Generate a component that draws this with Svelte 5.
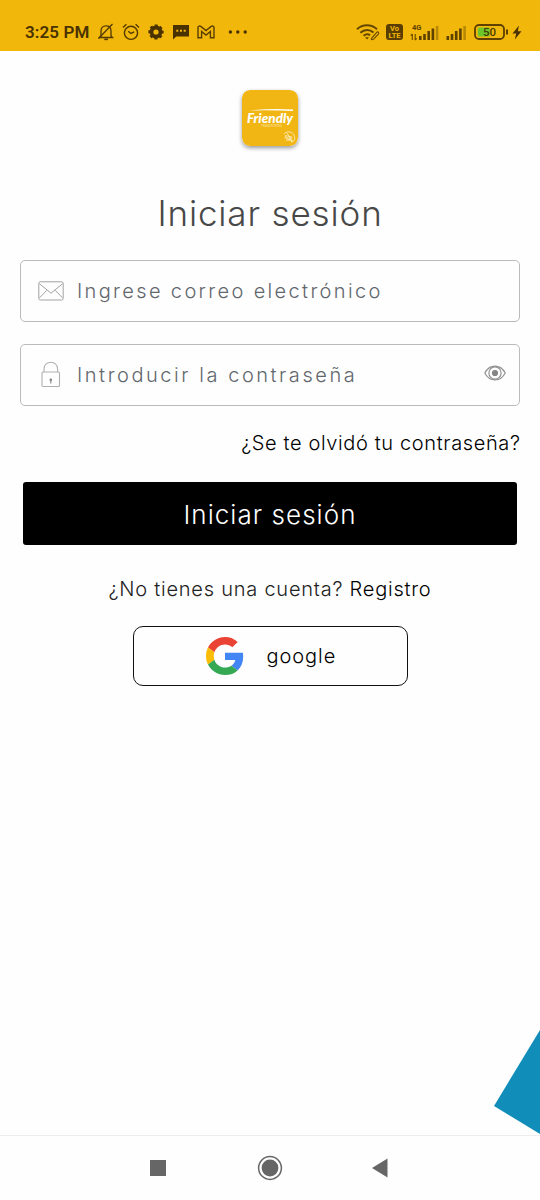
<script>
	let email = $state("");
	let password = $state("");
	let showPassword = $state(false);

	// bar heights of the signal icons, the last one is dimmed
	const bars = [4, 6, 9, 11.5, 14];
</script>

<div class="screen">
	<header class="status">
		<span class="time">3:25 PM</span>
		<svg class="bell" width="18" height="18" viewBox="0 0 18 18" fill="none" stroke="#533900" stroke-width="1.3">
			<path d="M4 12.8V8C4 4.7 6 2.8 9 2.8s5 1.9 5 5.2v4.8l1.5 1.7H2.5z" />
			<path d="M1.5 15.5L15.5 1" />
			<path d="M7.3 16.3h3.6" stroke-width="1.7" />
		</svg>
		<svg class="alarm" width="18" height="18" viewBox="0 0 18 18" fill="none" stroke="#533900" stroke-width="1.4">
			<circle cx="9" cy="9.8" r="6.6" />
			<path d="M1 4.4L4.4 1.3M17 4.4l-3.4-3.1M6.2 8.2L9 10.5l3.2-1.6" />
		</svg>
		<svg class="gear" width="16" height="16" viewBox="0 0 16 16" fill="none" stroke="#4a3200">
			<circle cx="8" cy="8" r="4.5" stroke-width="3.8" />
			<circle cx="8" cy="8" r="6.6" stroke-width="2" stroke-dasharray="3.1 2.08" stroke-dashoffset="1.5" />
		</svg>
		<svg class="chat" width="18" height="16" viewBox="0 0 18 16">
			<path d="M1 1h16v11.5H4.3L1 15.5z" fill="#4a3200" />
			<path d="M4.3 6.8h2m1.7 0h2m1.7 0h2" stroke="#f1b80b" stroke-width="2" />
		</svg>
		<svg class="mail" width="18" height="14" viewBox="0 0 18 14" fill="none" stroke="#5a3d00" stroke-width="1.4">
			<path d="M1 12.7V2.6C1 .9 2.7.6 3.8 1.4L9 5.5l5.2-4.1C15.3.6 17 .9 17 2.6v10.1h-3.6V6.5L9 10 4.6 6.5v6.2z" />
		</svg>
		<svg class="dots" width="20" height="4" viewBox="0 0 20 4" fill="#4a3200">
			<circle cx="2.4" cy="2" r="1.7" /><circle cx="9.8" cy="2" r="1.7" /><circle cx="17.2" cy="2" r="1.7" />
		</svg>

		<svg class="wifi" width="24" height="18" viewBox="0 0 24 18" fill="none" stroke="#654700" stroke-width="2">
			<path d="M1 6.3C6.6.9 15.4.9 21 6.3M4.3 9.7c4-3.7 9.4-3.7 13.2-.3M7.6 12.8c1.8-1.7 4.6-1.9 6.5-.7" />
			<path d="M9 14.2l2 2.2 2-2.2z" fill="#654700" stroke="none" />
			<path d="M15.5 15.3l5.2-6c1.5-1 2.7.5 1.7 1.8l-4.8 5c-1.5 1-2.8.3-2.1-.8z" stroke-width="1.1" />
		</svg>
		<svg class="volte" width="17" height="16" viewBox="0 0 17 16">
			<rect width="17" height="16" rx="3" fill="#5a3d00" />
			<text x="8.5" y="7.2" text-anchor="middle">Vo</text>
			<text x="8.5" y="14.2" text-anchor="middle">LTE</text>
		</svg>
		<svg class="signal" width="29" height="18" viewBox="0 0 29 18">
			<text class="net" x="2" y="7">4G</text>
			<path d="M2.3 17v-6M.8 12.6L2.3 11M5.2 11v6M6.7 15.4L5.2 17" stroke="#654700" stroke-width="1.1" fill="none" />
			{#each bars as h, i}
				<rect x={9 + i * 4.2} y={17 - h} width="2.6" height={h} fill="#5e4100" opacity={i === 4 ? 0.4 : 1} />
			{/each}
		</svg>
		<svg class="signal2" width="21" height="18" viewBox="0 0 21 18">
			{#each bars as h, i}
				<rect x={0.5 + i * 4.2} y={17 - h} width="2.6" height={h} fill="#5e4100" opacity={i === 4 ? 0.4 : 1} />
			{/each}
		</svg>
		<svg class="battery" width="35" height="16" viewBox="0 0 35 16">
			<rect x="1" y="1" width="29" height="14" rx="4" fill="none" stroke="#5e4100" stroke-width="1.8" />
			<rect x="3.8" y="3.6" width="12" height="8.8" rx="1.5" fill="#6cc72a" />
			<path d="M33 5.5v5" stroke="#5e4100" stroke-width="2" />
			<text class="level" x="15.5" y="12" text-anchor="middle">50</text>
		</svg>
		<svg class="bolt" width="10" height="15" viewBox="0 0 10 15" fill="#4a3200">
			<path d="M7 .5L.5 8.6h3.7L2.8 14.5 9.5 6.2H5.8z" />
		</svg>
	</header>

	<main>
		<svg class="logo" width="56" height="56" viewBox="0 0 56 56">
			<rect width="56" height="56" rx="8" fill="#f1b514" />
			<path d="M7 20.6Q28 18.2 51 19.6V21Q28 19.8 7 20.6z" fill="#fff" />
			<text class="brand" x="5" y="32.5" textLength="46" lengthAdjust="spacingAndGlyphs">Friendly</text>
			<text class="tag" x="19" y="37" textLength="21">TRANSPORTES</text>
			<g fill="none" stroke="#fff3c8" stroke-width=".8">
				<path d="M42 44c2-3 8-3 10 1s0 7-3 7M43 45.5l7 1.5M42.5 48h8M44 50.5l5-1.5M45 43l5 8M43 46c2 3 4 5 8 5" />
			</g>
		</svg>

		<h1>Iniciar sesión</h1>

		<label class="field">
			<svg class="envelope" width="26" height="20" viewBox="0 0 26 20" fill="none" stroke="#a2a2a2" stroke-width="1">
				<rect x=".8" y=".8" width="24.4" height="18.2" rx="1.6" />
				<path d="M1.5 2.8L13 12.2 24.5 2.8M1.5 16.8l7.3-7.5M24.5 16.8l-7.3-7.5" />
			</svg>
			<input class="mailtext" type="text" placeholder="Ingrese correo electrónico" bind:value={email} />
		</label>

		<label class="field second">
			<svg class="lock" width="20" height="27" viewBox="0 0 20 27" fill="none" stroke="#b0b0b0" stroke-width="1.1">
				<rect x="1" y="11" width="17.5" height="14.5" rx="1" />
				<path d="M3 11V8c0-9 13.6-9 13.6 0v3" />
				<path d="M9.8 18v4.5" stroke="#888" />
				<circle cx="9.8" cy="18.8" r=".8" fill="#888" stroke="#888" />
			</svg>
			<input class="passtext" type={showPassword ? "text" : "password"} placeholder="Introducir la contraseña" bind:value={password} />
			<button class="eye" type="button" aria-label="Mostrar" onclick={() => showPassword = !showPassword}>
				<svg width="22" height="16" viewBox="0 0 22 16" fill="none" stroke="#929292" stroke-width="1.2">
					<path d="M.8 8C5.5-1.2 16.5-1.2 21.2 8 16.5 17.2 5.5 17.2.8 8z" />
					<circle cx="11" cy="8" r="6.1" />
					<circle cx="11" cy="8" r="3.1" fill="#858585" stroke="none" />
				</svg>
			</button>
		</label>

		<p class="forgot">¿Se te olvidó tu contraseña?</p>

		<button class="login" type="button">Iniciar sesión</button>

		<p class="register">¿No tienes una cuenta? <b>Registro</b></p>

		<button class="google" type="button">
			<svg width="38" height="38" viewBox="0 0 48 48">
				<path fill="#EA4335" d="M24 9.5c3.54 0 6.71 1.22 9.21 3.6l6.85-6.85C35.9 2.38 30.47 0 24 0 14.62 0 6.51 5.38 2.56 13.22l7.98 6.19C12.43 13.72 17.74 9.5 24 9.5z" />
				<path fill="#4285F4" d="M46.98 24.55c0-1.57-.15-3.09-.38-4.55H24v9.02h12.94c-.58 2.96-2.26 5.48-4.78 7.18l7.73 6c4.51-4.18 7.09-10.36 7.09-17.65z" />
				<path fill="#FBBC05" d="M10.53 28.59c-.48-1.45-.76-2.99-.76-4.59s.27-3.14.76-4.59l-7.98-6.19C.92 16.46 0 20.12 0 24c0 3.88.92 7.54 2.56 10.78l7.97-6.19z" />
				<path fill="#34A853" d="M24 48c6.48 0 11.93-2.13 15.89-5.81l-7.73-6c-2.15 1.45-4.92 2.3-8.16 2.3-6.26 0-11.57-4.22-13.47-9.91l-7.98 6.19C6.51 42.62 14.62 48 24 48z" />
			</svg>
			<span>google</span>
		</button>
	</main>

	<svg class="corner" width="46" height="105" viewBox="0 0 46 105">
		<path d="M46 0v104L0 76z" fill="#118dba" />
	</svg>

	<nav>
		<svg width="22" height="26" viewBox="0 0 22 26"><rect x="3" y="5" width="16" height="16" fill="#666" /></svg>
		<svg width="26" height="26" viewBox="0 0 26 26">
			<circle cx="13" cy="13" r="11.4" fill="none" stroke="#666" stroke-width="1.5" />
			<circle cx="13" cy="13" r="8.4" fill="#666" />
		</svg>
		<svg width="22" height="26" viewBox="0 0 22 26"><path d="M3 13L18.5 3.6v18.8z" fill="#666" /></svg>
	</nav>
</div>

<style>
	:global(body) {
		background: #fefefe;
	}

	.screen {
		position: relative;
		display: flex;
		flex-direction: column;
		width: 540px;
		height: 1200px;
		overflow: hidden;
		font-family: Inter, "Open Sans", sans-serif;
		font-weight: 300;
	}

	.status {
		display: flex;
		align-items: center;
		height: 51px;
		box-sizing: border-box;
		padding: 13px 18px 0 25px;
		background: #f1b80b;
	}
	.status svg {
		flex: none;
	}
	.time {
		width: 72px;
		font: 600 17px Roboto, sans-serif;
		letter-spacing: 0.1px;
		color: #4a3200;
		white-space: nowrap;
	}
	.alarm { margin-left: 7px; }
	.gear { margin-left: 8px; }
	.chat { margin-left: 8px; }
	.mail { margin-left: 7px; }
	.dots { margin-left: 13px; }
	.wifi { margin-left: auto; }
	.volte { margin-left: 6px; }
	.signal { margin-left: 7px; }
	.signal2 { margin-left: 7px; }
	.battery { margin-left: 7px; }
	.bolt { margin-left: 3px; }
	.volte text {
		font: 700 7.5px Roboto, sans-serif;
		fill: #f1b80b;
	}
	.net {
		font: 700 7.5px Roboto, sans-serif;
		fill: #5e4100;
	}
	.level {
		font: 500 11.5px Roboto, sans-serif;
		fill: #4a3a00;
	}

	main {
		flex: 1;
		display: flex;
		flex-direction: column;
		align-items: center;
		padding: 39px 20px 0;
	}
	.logo {
		border-radius: 8px;
		box-shadow: 0 2px 4px rgba(0, 0, 0, 0.4);
	}
	.brand {
		font: italic 900 14px Lato, sans-serif;
		fill: #fff;
	}
	.tag {
		font: 400 3.2px Lato, sans-serif;
		fill: #fbe2a0;
	}

	h1 {
		margin: 43px 0 0;
		height: 48px;
		line-height: 48px;
		font-size: 35px;
		font-weight: 300;
		letter-spacing: 0.85px;
		color: #484848;
		white-space: nowrap;
	}

	.field {
		display: flex;
		align-items: center;
		width: 500px;
		height: 62px;
		box-sizing: border-box;
		margin-top: 23px;
		padding: 0 13px 0 17px;
		border: 1px solid #bbb;
		border-radius: 5px;
	}
	.second {
		margin-top: 22px;
	}
	.envelope {
		margin-top: -1px;
	}
	.field input {
		flex: 1;
		min-width: 0;
		margin-left: 13px;
		padding: 0;
		border: 0;
		outline: 0;
		background: none;
		font: inherit;
		font-size: 20px;
		letter-spacing: 2.35px;
	}
	.field input::placeholder {
		color: #62676d;
		opacity: 1;
	}
	.lock {
		margin-left: 3px;
		margin-top: -1px;
	}
	.field .passtext {
		margin-left: 16px;
		letter-spacing: 2.55px;
	}
	.eye {
		display: flex;
		padding: 0;
		border: 0;
		background: none;
		margin-top: -4px;
	}

	.forgot {
		align-self: flex-end;
		margin: 24px -0.6px 0 0;
		font-size: 20px;
		line-height: 26px;
		letter-spacing: 0.63px;
		white-space: nowrap;
		color: #000;
	}

	.login {
		width: 494px;
		height: 63px;
		margin-top: 26px;
		padding: 2px 0 0;
		border: 0;
		border-radius: 3px;
		background: #000;
		color: #fff;
		font: inherit;
		font-size: 26px;
		letter-spacing: 1.05px;
	}

	.register {
		margin: 31px 0 0;
		font-size: 20px;
		line-height: 26px;
		letter-spacing: 0.77px;
		white-space: nowrap;
		color: #222;
	}
	.register b {
		font-weight: 300;
		color: #000;
	}

	.google {
		display: flex;
		align-items: center;
		width: 275px;
		height: 60px;
		margin-top: 24px;
		padding: 0 0 0 72px;
		border: 1px solid #111;
		border-radius: 10px;
		background: none;
		color: #000;
		font: inherit;
		font-size: 20px;
		letter-spacing: 0.95px;
	}
	.google span {
		margin-left: 23px;
	}

	.corner {
		position: absolute;
		right: 0;
		bottom: 65px;
	}

	nav {
		display: flex;
		align-items: center;
		justify-content: space-between;
		height: 65px;
		box-sizing: border-box;
		padding: 0 149px 0 147px;
		border-top: 1px solid #ededed;
	}
	nav svg:nth-child(2) {
		margin-left: 2px;
	}
</style>
